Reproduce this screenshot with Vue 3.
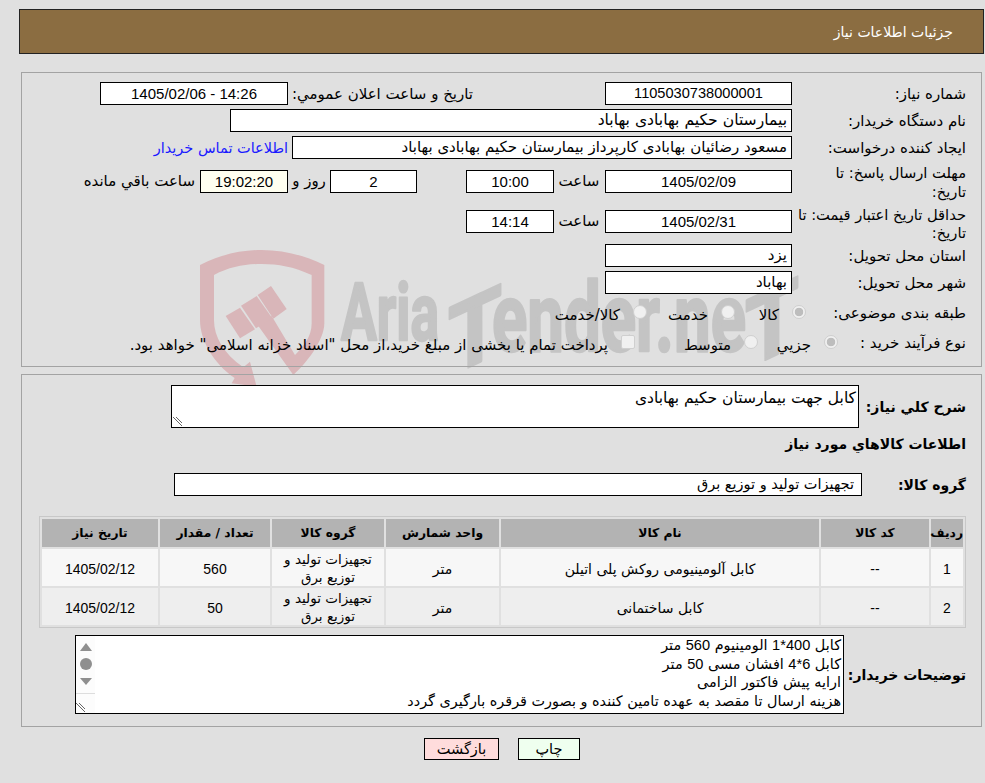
<script setup>
const items = [
  { n: '1', code: '--', name: 'کابل آلومینیومی روکش پلی اتیلن', unit: 'متر', group: 'تجهیزات تولید و توزیع برق', qty: '560', date: '1405/02/12' },
  { n: '2', code: '--', name: 'کابل ساختمانی', unit: 'متر', group: 'تجهیزات تولید و توزیع برق', qty: '50', date: '1405/02/12' },
]
</script>

<template>
  <div class="page">
    <svg class="mark" width="620" height="160" viewBox="0 0 620 160" aria-hidden="true">
      <g transform="scale(0.33333)" fill="#d9b6b9">
        <path fill-rule="evenodd" d="M30 75C90 45 150 30 215 30C280 30 340 45 403 75L403 250C403 300 350 370 310 405L205 258L245 228L315 345C340 320 365 290 365 250L365 105C310 80 265 72 215 72C165 72 120 80 72 105L72 240C72 290 100 340 160 382L180 365L200 440L125 430L134 414C70 370 30 300 30 240Z" />
        <path d="M107 228L150 203L195 268L150 295Z" />
        <path d="M153 197L200 168L247 235L198 265Z" />
        <path d="M203 165L243 138L290 207L250 236Z" />
      </g>
      <g class="mark-text" fill="#c4c4c4" stroke="#c4c4c4" stroke-width="2.5" stroke-linejoin="round">
        <text class="aria" x="151" y="100" textLength="98" lengthAdjust="spacingAndGlyphs">Aria</text>
        <text x="258" y="107" textLength="54" lengthAdjust="spacingAndGlyphs" transform="translate(0 150) skewY(-25)">T</text>
        <text x="302" y="111" textLength="254" lengthAdjust="spacingAndGlyphs">ender.ne</text>
        <text x="555" y="130" textLength="54" lengthAdjust="spacingAndGlyphs" transform="translate(0 258) skewY(-25)">T</text>
      </g>
    </svg>

    <header class="title">جزئیات اطلاعات نیاز</header>

    <section class="panel form">
      <div class="row">
        <label class="lbl">شماره نیاز:</label>
        <div class="box date center num id">1105030738000001</div>
        <label class="lbl-pub">تاریخ و ساعت اعلان عمومي:</label>
        <div class="box pub center num">14:26 - 1405/02/06</div>
      </div>
      <div class="row">
        <label class="lbl">نام دستگاه خریدار:</label>
        <div class="box buyer">بیمارستان حکیم بهابادی بهاباد</div>
      </div>
      <div class="row">
        <label class="lbl">ایجاد کننده درخواست:</label>
        <div class="box creator">مسعود رضائیان بهابادی کارپرداز بیمارستان حکیم بهابادی بهاباد</div>
        <a class="contact">اطلاعات تماس خریدار</a>
      </div>
      <div class="row tall-a">
        <label class="lbl two">مهلت ارسال پاسخ: تا<br />تاریخ:</label>
        <div class="box date center num">1405/02/09</div>
        <span class="word">ساعت</span>
        <div class="box time center num">10:00</div>
        <div class="box days center num">2</div>
        <span class="word-day">روز و</span>
        <div class="box timer center num">19:02:20</div>
        <span class="word-left">ساعت باقي مانده</span>
      </div>
      <div class="row tall-b">
        <label class="lbl two">حداقل تاریخ اعتبار قیمت: تا<br />تاریخ:</label>
        <div class="box date center num">1405/02/31</div>
        <span class="word">ساعت</span>
        <div class="box time center num">14:14</div>
      </div>
      <div class="row">
        <label class="lbl">استان محل تحویل:</label>
        <div class="box date">یزد</div>
      </div>
      <div class="row">
        <label class="lbl">شهر محل تحویل:</label>
        <div class="box date">بهاباد</div>
      </div>
      <div class="opts kind">
        <label class="lbl-kind">طبقه بندی موضوعی:</label>
        <div class="opt w71"><span class="radio on"></span><span class="opt-text">کالا</span></div>
        <div class="opt w88"><span class="radio"></span><span class="opt-text">خدمت</span></div>
        <div class="opt"><span class="radio"></span><span class="opt-text">کالا/خدمت</span></div>
      </div>
      <div class="opts proc">
        <label class="lbl-proc">نوع فرآیند خرید :</label>
        <div class="opt w80"><span class="radio on"></span><span class="opt-text">جزیي</span></div>
        <div class="opt w123"><span class="radio"></span><span class="opt-text">متوسط</span></div>
        <div class="opt"><span class="check"></span><span class="opt-text">پرداخت تمام یا بخشی از مبلغ خرید،از محل "اسناد خزانه اسلامی" خواهد بود.</span></div>
      </div>
    </section>

    <section class="panel detail">
      <div class="desc-row">
        <label class="head-lbl">شرح کلي نیاز:</label>
        <div class="area summary">
          کابل جهت بیمارستان حکیم بهابادی
          <svg class="grip" width="10" height="10" viewBox="0 0 10 10"><path d="M0 1L9 10M3 1L9 7M6 7L9 10" stroke="#666" fill="none" /></svg>
        </div>
      </div>
      <h3 class="goods-title">اطلاعات کالاهاي مورد نیاز</h3>
      <div class="group-row">
        <label class="head-lbl">گروه کالا:</label>
        <div class="box group">تجهیزات تولید و توزیع برق</div>
      </div>

      <table class="goods">
        <colgroup>
          <col class="c1" /><col class="c2" /><col class="c3" /><col class="c4" />
          <col class="c5" /><col class="c6" /><col class="c7" />
        </colgroup>
        <thead>
          <tr>
            <th>ردیف</th><th>کد کالا</th><th>نام کالا</th><th>واحد شمارش</th>
            <th>گروه کالا</th><th>تعداد / مقدار</th><th>تاریخ نیاز</th>
          </tr>
        </thead>
        <tbody>
          <tr v-for="it in items" :key="it.n">
            <td class="tnum">{{ it.n }}</td><td class="tnum">{{ it.code }}</td><td>{{ it.name }}</td><td>{{ it.unit }}</td>
            <td class="wrap">{{ it.group }}</td><td class="tnum">{{ it.qty }}</td><td class="tnum">{{ it.date }}</td>
          </tr>
        </tbody>
      </table>

      <div class="note-row">
        <label class="head-lbl">توضیحات خریدار:</label>
        <div class="area notes">
          <div class="notes-text">
            <div>کابل <span class="nnum">400*1</span> الومینیوم <span class="nnum">560</span> متر</div>
            <div>کابل <span class="nnum">6*4</span> افشان مسی <span class="nnum">50</span> متر</div>
            <div>ارایه پیش فاکتور الزامی</div>
            <div>هزینه ارسال تا مقصد به عهده تامین کننده و بصورت قرقره بارگیری گردد</div>
          </div>
          <div class="scroll">
            <div class="track">
              <span class="up"></span>
              <span class="thumb"></span>
              <span class="down"></span>
            </div>
            <div class="corner">
              <svg width="10" height="10" viewBox="0 0 10 10"><path d="M0 1L9 10M3 1L9 7M6 7L9 10" stroke="#666" fill="none" /></svg>
            </div>
          </div>
        </div>
      </div>
    </section>

    <div class="actions">
      <button class="btn print" type="button">چاپ</button>
      <button class="btn back" type="button">بازگشت</button>
    </div>
  </div>
</template>

<style>
html { background: #e0e0e0; }
</style>

<style scoped>
.page {
  position: relative;
  direction: rtl;
  width: 985px;
  height: 783px;
  overflow: hidden;
  box-sizing: border-box;
  padding-top: 9px;
  font-family: "DejaVu Sans", sans-serif;
  font-size: 15px;
  color: #000;
}
.mark { position: absolute; left: 190px; top: 240px; z-index: -1; }
.mark-text text { font-family: "Roboto", sans-serif; font-weight: 700; font-size: 96px; direction: ltr; }
.mark-text .aria { font-size: 80px; }
.num { font-family: "Liberation Sans", sans-serif; font-size: 15px; }
.id { font-size: 14.6px; }

.title {
  box-sizing: border-box;
  height: 45px;
  margin: 0 1px 0 0;
  margin-left: 19px;
  background: #8b6d41;
  border: 1px solid #222;
  color: #fff;
  padding: 13px 30px 0 0;
  font-size: 14px;
  line-height: 18px;
}
.panel {
  box-sizing: border-box;
  margin: 0 3px 0 21px;
  border: 1px solid #a3a3a3;
  width: 961px;
}
.form { margin-top: 18px; height: 295px; padding: 9px 15px 0 0; }
.detail { margin-top: 7px; height: 353px; padding: 10px 15px 0 0; }

.row { display: flex; align-items: flex-start; height: 27px; }
.tall-a { height: 40px; margin-top: 7px; }
.tall-b { height: 34px; }
.box {
  box-sizing: border-box;
  height: 23px;
  flex: none;
  background: #fff;
  border: 1px solid #000;
  padding: 0 4px;
  line-height: 21px;
  white-space: nowrap;
  overflow: hidden;
}
.center { text-align: center; }
.lbl { width: 174px; flex: none; box-sizing: border-box; line-height: 24px; white-space: nowrap; }
.two { line-height: 19px; margin-top: -7px; font-size: 14.7px; }
.tall-b .two { margin-top: -4px; line-height: 18px; }
.date { width: 187px; }
.lbl-pub { margin-right: 132px; width: 185px; flex: none; line-height: 24px; white-space: nowrap; }
.pub { width: 188px; }
.buyer { width: 562px; font-size: 15.6px; }
.creator { width: 500px; }
.contact { margin-right: 4px; color: #1a1aff; line-height: 24px; white-space: nowrap; font-size: 14.5px; }
.word { width: 50px; margin-right: 1px; flex: none; text-align: center; line-height: 23px; }
.time { width: 88px; }
.days { width: 87px; margin-right: 49px; }
.word-day { width: 42px; flex: none; text-align: center; line-height: 23px; }
.timer { width: 88px; background: #fffff0; }
.word-left { margin-right: 5px; line-height: 23px; white-space: nowrap; }

.opts { display: flex; align-items: center; height: 30px; }
.lbl-kind { width: 160px; flex: none; white-space: nowrap; }
.lbl-proc { width: 128px; flex: none; white-space: nowrap; }
.opt { display: flex; align-items: flex-start; gap: 13px; white-space: nowrap; flex: none; }
.opt-text { line-height: 18px; margin-top: 3px; }
.w71 { width: 71px; }
.w88 { width: 88px; }
.w80 { width: 80px; }
.w123 { width: 123px; }
.radio {
  width: 14px;
  height: 14px;
  margin-top: 2px;
  box-sizing: border-box;
  flex: none;
  border-radius: 50%;
  border: 1px solid #cfcfcf;
  background: #f0f0f0;
}
.radio.on { background: radial-gradient(circle, #bdbdbd 0 4px, #f0f0f0 4.6px); }
.check {
  width: 14px;
  height: 14px;
  margin-top: 2px;
  box-sizing: border-box;
  flex: none;
  border-radius: 2px;
  border: 1px solid #cfcfcf;
  background: #f0f0f0;
}

.desc-row, .group-row, .note-row { display: flex; align-items: center; }
.head-lbl { font-weight: 700; font-size: 14px; white-space: nowrap; flex: none; }
.desc-row { height: 43px; }
.desc-row .head-lbl { width: 107px; }
.area {
  position: relative;
  box-sizing: border-box;
  background: #fff;
  border: 1px solid #000;
  flex: none;
}
.summary { width: 688px; height: 43px; padding: 2px 2px; line-height: 20px; font-size: 15.5px; }
.grip { position: absolute; left: 1px; bottom: 1px; }
.goods-title { margin: 6px 0 0; font-size: 14px; font-weight: 700; line-height: 20px; height: 20px; }
.group-row { height: 23px; margin-top: 19px; }
.group-row .head-lbl { width: 104px; }
.group { width: 688px; padding-right: 7px; font-size: 14.5px; }

.goods {
  width: 927px;
  margin: 20px 0 0;
  box-sizing: border-box;
  table-layout: fixed;
  border-collapse: separate;
  border-spacing: 2px;
  border: 1px solid #c8c8c8;
}
.c1 { width: 32px; }
.c2 { width: 108px; }
.c3 { width: 318px; }
.c4 { width: 113px; }
.c5 { width: 112px; }
.c6 { width: 110px; }
th { background: #b3b3b3; height: 28px; padding: 0; font-size: 12.3px; font-weight: 700; white-space: nowrap; }
td { box-sizing: border-box; height: 37px; padding: 2px 0 0; text-align: center; line-height: 18px; font-size: 14px; }
.tnum { font-family: "Liberation Sans", sans-serif; font-size: 14px; }
tbody tr:nth-child(odd) td { background: #f7f7f7; }
tbody tr:nth-child(even) td { background: #eeeeee; }
td.wrap { padding: 0 10px; font-size: 13.5px; }

.note-row { height: 79px; margin-top: 7px; }
.note-row .head-lbl { width: 122px; }
.notes { width: 769px; height: 79px; display: flex; }
.notes-text { flex: 1; padding: 0 2px 0 0; line-height: 18.5px; white-space: nowrap; font-size: 14.4px; }
.nnum { font-family: "Liberation Sans", sans-serif; font-size: 14.6px; }
.scroll { width: 19px; flex: none; display: flex; flex-direction: column; background: #fcfcfc; }
.track { height: 58px; display: flex; flex-direction: column; align-items: center; justify-content: flex-start; border-bottom: 1px solid #ddd; box-sizing: border-box; }
.up { margin-top: 7px; border: 6.5px solid transparent; border-top: 0; border-bottom: 8px solid #8f8f8f; }
.thumb { margin-top: 7px; width: 12px; height: 12px; border-radius: 50%; background: #8f8f8f; }
.down { margin-top: 8px; border: 6.5px solid transparent; border-bottom: 0; border-top: 7px solid #8f8f8f; }
.corner { flex: 1; display: flex; align-items: flex-end; padding-bottom: 1px; justify-content: flex-end; }

.actions { display: flex; justify-content: flex-start; margin-top: 11px; padding-right: 405px; gap: 19px; }
.btn {
  box-sizing: border-box;
  height: 22px;
  border: 1px solid #000;
  font-family: inherit;
  font-size: 14.5px;
  color: #000;
  padding: 0;
  direction: rtl;
}
.print { width: 62px; background: #efffef; }
.back { width: 75px; background: #ffdcdc; }
</style>
